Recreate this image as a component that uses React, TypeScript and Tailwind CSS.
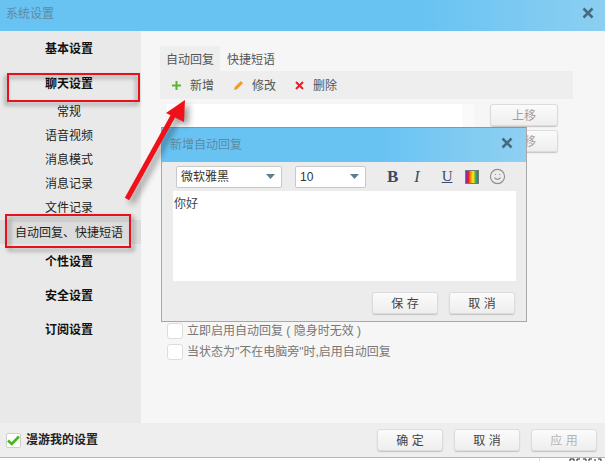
import { Smile } from "lucide-react"

const cjk = "font-['Liberation_Sans','Noto_Sans_CJK_SC',sans-serif]"

const navItems = [
  { label: "基本设置", cls: "mt-[6px] font-bold text-[#111]" },
  { label: "聊天设置", cls: "mt-[11px] font-bold text-[#111]" },
  { label: "常规", cls: "mt-[4px] text-[#222]" },
  { label: "语音视频", cls: "text-[#222]" },
  { label: "消息模式", cls: "text-[#222]" },
  { label: "消息记录", cls: "text-[#222]" },
  { label: "文件记录", cls: "text-[#222]" },
  { label: "自动回复、快捷短语", cls: "bg-[#dcdcdc] pt-[1px] text-[#222]" },
  { label: "个性设置", cls: "mt-[6px] font-bold text-[#111]" },
  { label: "安全设置", cls: "mt-[10px] font-bold text-[#111]" },
  { label: "订阅设置", cls: "mt-[10px] font-bold text-[#111]" },
]

function CloseIcon({ className = "" }: { className?: string }) {
  return (
    <svg width="12" height="12" viewBox="0 0 12 12" className={`shrink-0 ${className}`}>
      <path d="M1.5 1.5L10.5 10.5M10.5 1.5L1.5 10.5" stroke="#466b80" strokeWidth="2.6" />
    </svg>
  )
}

function Btn({ label, disabled, className = "" }: { label: string; disabled?: boolean; className?: string }) {
  return (
    <div
      className={`flex h-[22px] w-[66px] items-center justify-center rounded-[3px] border border-[#dcdcdc] bg-gradient-to-b from-[#fbfbfb] to-[#eeeeee] pt-[1px] text-[12px] shadow-[0_1px_1px_#c4c4c4] ${
        disabled ? "text-[#b5b5b5]" : "text-[#444]"
      } ${className}`}
    >
      {label}
    </div>
  )
}

function Caret() {
  return (
    <svg width="9" height="5" viewBox="0 0 9 5">
      <path d="M0 0H9L4.5 5Z" fill="#5f7d8c" />
    </svg>
  )
}

function Select({ value, className }: { value: string; className: string }) {
  return (
    <div className={`flex h-[22px] items-center justify-between rounded-[2px] border border-[#c8c8c8] bg-white pl-[4px] pr-[6px] text-[12px] text-[#333] ${className}`}>
      <span>{value}</span>
      <Caret />
    </div>
  )
}

function EmptyCheck() {
  return <div className="h-[16px] w-[16px] shrink-0 rounded-[3px] border border-[#dddddd] bg-white" />
}

export default function App() {
  return (
    <div className={`relative flex h-[461px] w-[605px] flex-col overflow-hidden bg-white ${cjk}`}>
      {/* Title bar */}
      <div className="flex h-[31px] shrink-0 items-center justify-between bg-gradient-to-r from-[#68c3f3] via-[#68c3f3] via-70% to-[#8bcff1] pb-[4px] pl-[6px] pr-[11px]">
        <span className="text-[12px] text-[#5f8aa3]">系统设置</span>
        <CloseIcon className="-mt-[1px]" />
      </div>

      <div className="flex h-[392px] shrink-0">
        {/* Sidebar */}
        <div className="flex w-[141px] shrink-0 flex-col bg-[#e9e9e9]">
          {navItems.map((item) => (
            <div key={item.label} className={`flex h-[24px] shrink-0 items-center justify-center pr-[3px] text-[12px] ${item.cls}`}>
              {item.label}
            </div>
          ))}
        </div>

        {/* Main panel */}
        <div className="flex flex-1 flex-col bg-[#f6f6f6] pl-[19px] pr-[32px] pt-[15px]">
          <div className="flex h-[25px] shrink-0 items-center pt-[2px] text-[12px] text-[#555]">
            <div className="-mt-[2px] flex h-[25px] w-[60px] items-center justify-center bg-[#eeeeee] pt-[2px]">自动回复</div>
            <div className="ml-[7px]">快捷短语</div>
          </div>
          <div className="flex h-[28px] shrink-0 items-center bg-[#eeeeee] pl-[12px] pt-[1px] text-[12px] text-[#555]">
            <svg width="9" height="9" viewBox="0 0 9 9">
              <path d="M4.5 0V9M0 4.5H9" stroke="#5cb531" strokeWidth="2" />
            </svg>
            <span className="ml-[9px]">新增</span>
            <svg width="11" height="11" viewBox="0 0 11 11" className="ml-[19px]">
              <path d="M1 10L1.8 7L7.8 1L10 3.2L4 9.2Z" fill="#f59a23" />
            </svg>
            <span className="ml-[8px]">修改</span>
            <svg width="9" height="9" viewBox="0 0 9 9" className="ml-[19px]">
              <path d="M1 1L8 8M8 1L1 8" stroke="#ee1c25" strokeWidth="2" />
            </svg>
            <span className="ml-[9px]">删除</span>
          </div>

          <div className="mt-[5px] flex shrink-0 pl-[7px]">
            <div className="h-[216px] w-[307px] bg-[linear-gradient(to_right,#ffffff_96%,#fafafa_96%)]" />
            <div className="ml-[16px] flex flex-col gap-[4px]">
              <Btn label="上移" className="h-[22px] w-[68px] text-[#a0a0a0]" />
              <Btn label="下移" className="h-[22px] w-[68px] text-[#a0a0a0]" />
            </div>
          </div>

          <div className="mt-[3px] flex h-[15px] shrink-0 items-center gap-[4px] pl-[7px] text-[12px] text-[#777]">
            <EmptyCheck />
            <span>立即启用自动回复 ( 隐身时无效 )</span>
          </div>
          <div className="mt-[6px] flex h-[15px] shrink-0 items-center gap-[4px] pl-[7px] pt-[1px] text-[12px] text-[#777]">
            <EmptyCheck />
            <span>当状态为"不在电脑旁"时,启用自动回复</span>
          </div>
        </div>
      </div>

      {/* Footer */}
      <div className="flex h-[35px] shrink-0 items-center justify-between border-b border-[#b5b5b5] bg-[#eeeeee] pl-[6px] pr-[8px]">
        <div className="flex items-center gap-[5px] text-[12px] font-bold text-[#222]">
          <div className="flex h-[15px] w-[15px] items-center justify-center rounded-[2px] border border-[#cfcfcf] bg-white">
            <svg width="13" height="11" viewBox="0 0 13 11">
              <path d="M1 5.5L4.8 9L12 1.5" fill="none" stroke="#46b91a" strokeWidth="2.6" />
            </svg>
          </div>
          漫游我的设置
        </div>
        <div className="flex gap-[11px]">
          <Btn label="确 定" />
          <Btn label="取 消" />
          <Btn label="应 用" disabled />
        </div>
      </div>

      {/* Add-reply dialog */}
      <div className="absolute left-[161px] top-[127px] flex h-[195px] w-[366px] flex-col border border-t-[#5aa5d3] border-r-[#a8a8a8] border-b-[#a8a8a8] border-l-[#a8a8a8] bg-[#ececec]">
        <div className="flex h-[34px] shrink-0 items-center justify-between bg-gradient-to-r from-[#68c3f3] via-[#68c3f3] via-60% to-[#90d0f1] pl-[8px] pr-[13px]">
          <span className="-mt-[1px] text-[12px] text-[#5f8aa3]">新增自动回复</span>
          <CloseIcon className="-mt-[5px]" />
        </div>
        <div className="flex h-[29px] shrink-0 items-center pl-[14px]">
          <Select value="微软雅黑" className="w-[106px]" />
          <Select value="10" className="ml-[13px] w-[71px]" />
          <span className="ml-[21px] font-['Liberation_Serif',serif] text-[17px] font-bold text-[#3b4a6b]">B</span>
          <span className="ml-[16px] font-['Liberation_Serif',serif] text-[16px] italic text-[#3b4a6b]">I</span>
          <span className="ml-[22px] font-['Liberation_Serif',serif] text-[15px] text-[#3b4a6b] underline">U</span>
          <div className="ml-[12px] h-[14px] w-[14px] border border-[#777] bg-[linear-gradient(to_right,#7b2fbe,#e01f26,#f7941d,#fff200,#39b54a,#2e6fd0)]" />
          <Smile size={17} strokeWidth={1.6} className="ml-[10px] text-[#8f8f8f]" />
        </div>
        <div className="ml-[11px] h-[90px] w-[343px] shrink-0 bg-white px-[1px] py-[5px] text-[12px] leading-[16px] text-[#444]">你好</div>
        <div className="mt-[11px] flex justify-end gap-[11px] pr-[11px]">
          <Btn label="保 存" />
          <Btn label="取 消" />
        </div>
      </div>

      {/* Red annotations */}
      <div className="absolute left-[7px] top-[73px] h-[29px] w-[133px] border-[2px] border-[#e8111b] drop-shadow-[-2px_3px_2px_rgba(0,0,0,0.4)]" />
      <div className="absolute left-[5px] top-[214px] h-[34px] w-[126px] border-[2px] border-[#e8111b] drop-shadow-[3px_3px_2px_rgba(0,0,0,0.4)]" />
      <svg width="605" height="461" viewBox="0 0 605 461" className="pointer-events-none absolute left-0 top-0 drop-shadow-[4px_4px_3px_rgba(0,0,0,0.4)]">
        <path d="M127 199L173 116" stroke="#f01018" strokeWidth="5" />
        <path d="M185 100L184 122L166 113Z" fill="#f01018" />
      </svg>

      {/* Cut-off remnant along the bottom edge */}
      <svg width="66" height="3" viewBox="0 0 66 3" className="absolute bottom-0 left-[539px]">
        <path d="M0.5 0V3" stroke="#dddddd" />
        <path d="M31 3V1H35V3M38 3V1H41M44 1H47V3M50 3V1H53M56 3V1M59 1H62V3" fill="none" stroke="#222" />
      </svg>
    </div>
  )
}
